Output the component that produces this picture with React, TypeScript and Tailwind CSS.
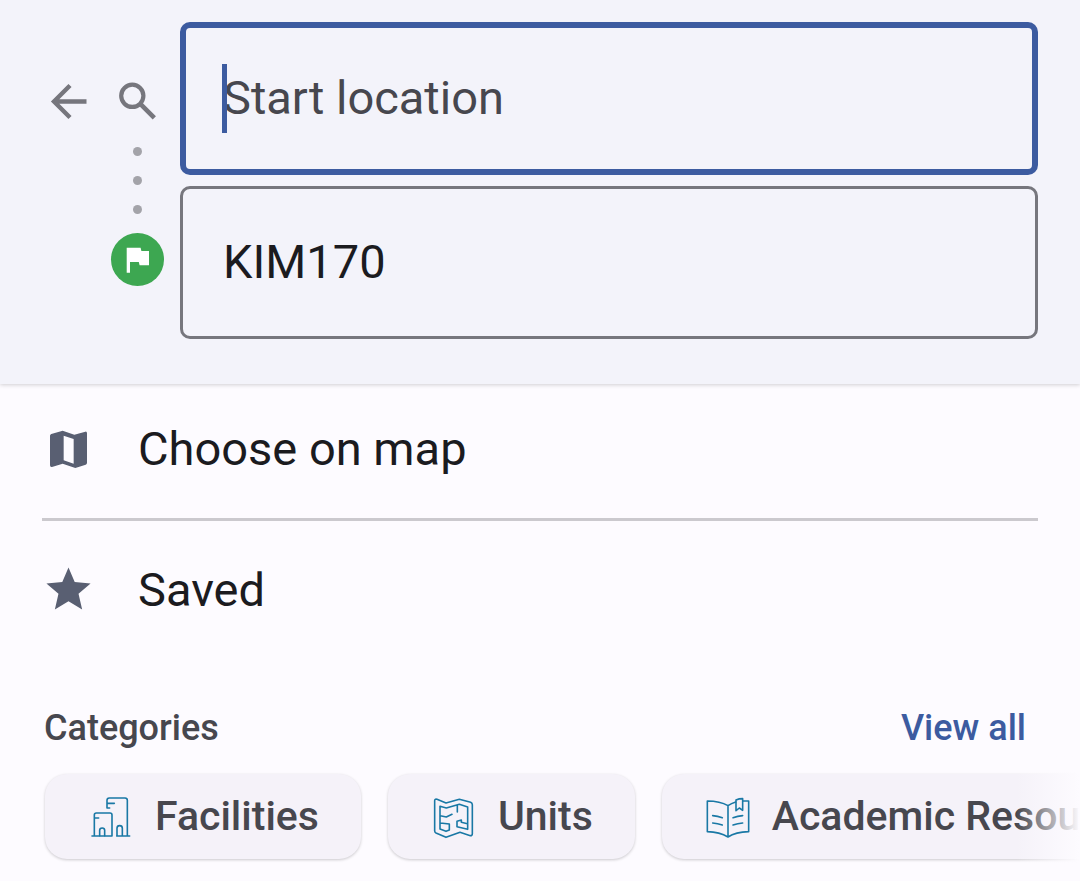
import type { ReactNode } from "react";

function ArrowLeftIcon() {
  return (
    <svg viewBox="0 0 53 53" className="size-[53px]" fill="none" stroke="#76767d" strokeWidth="4.4" aria-hidden="true">
      <path d="M44.5 26.5H12M28 10.5L12 26.5L28 42.5" />
    </svg>
  );
}

function SearchIcon() {
  return (
    <svg viewBox="0 0 53 53" className="size-[53px]" fill="none" stroke="#76767d" strokeWidth="4.2" aria-hidden="true">
      <circle cx="21.3" cy="20.8" r="11.1" />
      <path d="M29.3 28.8L43.3 42.8" strokeWidth="4.6" />
    </svg>
  );
}

function FlagIcon() {
  return (
    <svg viewBox="0 0 53 53" className="size-[53px]" fill="#fff" aria-hidden="true">
      <path d="M15.7 14.7H29.6L30.4 18H38V32.3H28.6L27.8 29H19V39.7H15.7Z" />
    </svg>
  );
}

function MapIcon() {
  return (
    <svg viewBox="36 36 159 159" className="size-[53px]" fill="#595f72" aria-hidden="true">
      <path
        fillRule="evenodd"
        d="M64 72L98 62.500L133 74L166 65Q171 64 171 70V158Q171 162 167 164L136 174L98 161L66 171Q60 172 60 166V77Q60 73.500 64 72ZM101 77V151L131 161V87Z"
      />
    </svg>
  );
}

function StarIcon() {
  return (
    <svg viewBox="0 0 24 24" className="size-[53px]" fill="#595f72" aria-hidden="true">
      <path d="M12 17.270L18.180 21L16.540 13.970L22 9.240L14.810 8.630L12 2L9.190 8.630L2 9.240L7.460 13.970L5.820 21Z" />
    </svg>
  );
}

function BuildingsIcon() {
  return (
    <svg viewBox="176 100 132 132" className="size-11 shrink-0" fill="none" stroke="#1978a5" strokeWidth="4.8" strokeLinecap="round" strokeLinejoin="round" aria-hidden="true">
      <path d="M185 223H245M192 223V160Q192 154 198 154H239Q245 154 245 160V223M194 169H205" />
      <path d="M208 222V206Q208 199 215.500 199Q223 199 223 206V222" />
      <path d="M238 139H230V116Q230 109 237 109H284Q291 109 291 116V223M231 125H252M259 223H298M260 222V200Q260 192 268 192Q276 192 276 200V222" />
    </svg>
  );
}

function FloorPlanIcon() {
  return (
    <svg viewBox="156 100 132 132" className="size-11 shrink-0" fill="none" stroke="#1978a5" strokeWidth="4.8" strokeLinecap="round" strokeLinejoin="round" aria-hidden="true">
      <path d="M164 117Q164 111 171 113L198 124L238 113L272 122Q277 124 277 129V216Q277 222 271 222L240 212L198 227L168 214Q164 212 164 208Z" />
      <path d="M180 134L199 139L238 128L263 136V203L231 195V179L244 175M180 134V202L198 209L208 205V187L181 184M181 162L199 166L216 158M232 131V151M244 175V182L262 186" />
    </svg>
  );
}

function BookIcon() {
  return (
    <svg viewBox="167 100 132 132" className="size-11 shrink-0" fill="none" stroke="#1978a5" strokeWidth="4.8" strokeLinecap="round" strokeLinejoin="round" aria-hidden="true">
      <path d="M233 132Q209 118 171 118V210Q208 211 233 226Q256 211 295 210V118H278M233 132Q243 125 256 121M233 132V226" />
      <path d="M257 115Q266 111 277 111V146L267 139L257 147Z" />
      <path d="M187 162Q202 163 216 168M187 184Q202 185 216 190M248 168Q262 163 277 162M248 190Q262 185 277 184" />
    </svg>
  );
}

function CategoryChip({ icon, label }: { icon: ReactNode; label: string }) {
  return (
    <button
      type="button"
      className="flex h-[85px] shrink-0 items-center gap-[22px] rounded-[22px] bg-[#f5f2f9] pr-[42px] pl-11 text-[41px] font-medium whitespace-nowrap text-[#47474e] shadow-[0_1px_3px_rgba(0,0,0,0.2)]"
    >
      {icon}
      {label}
    </button>
  );
}

export default function App() {
  return (
    <main className="min-h-screen overflow-hidden bg-[#fdfbff] font-[Roboto,sans-serif] text-[#1b1b1f]">
      <header className="flex gap-4 bg-[#f3f3fa] px-[42px] pt-[22px] pb-[45px] shadow-[0_1px_4px_rgba(0,0,0,0.18)]">
        <button type="button" aria-label="Back" className="mt-[53px] size-[53px] shrink-0">
          <ArrowLeftIcon />
        </button>
        <div className="flex shrink-0 flex-col items-center gap-[19px] pt-[53px]">
          <SearchIcon />
          <div className="flex flex-col gap-5">
            <span className="size-[9px] rounded-full bg-[#a3a3a9]" />
            <span className="size-[9px] rounded-full bg-[#a3a3a9]" />
            <span className="size-[9px] rounded-full bg-[#a3a3a9]" />
          </div>
          <span className="rounded-full bg-[#3da751]">
            <FlagIcon />
          </span>
        </div>
        <div className="flex min-w-0 flex-1 flex-col gap-[11px]">
          <div className="relative">
            <input
              type="text"
              aria-label="Start location"
              placeholder="Start location"
              className="block h-[153px] w-full rounded-[10px] border-6 border-[#3c5ba0] bg-transparent px-[37px] pb-[2px] text-[47px] outline-none placeholder:text-[#47474e]"
            />
            <span className="absolute top-[42px] left-[42px] h-[69px] w-[5px] bg-[#3c5ba0]" />
          </div>
          <input
            type="text"
            aria-label="Destination"
            defaultValue="KIM170"
            className="block h-[153px] w-full rounded-[10px] border-3 border-[#76767d] bg-transparent px-10 pb-[2px] text-[47px] outline-none"
          />
        </div>
      </header>

      <nav className="px-[42px]">
        <button type="button" className="flex w-full items-center gap-[43px] border-b-3 border-[#cbc9ce] pt-[38px] pb-[43px] text-left text-[47px] leading-[53px]">
          <MapIcon />
          Choose on map
        </button>
        <button type="button" className="flex w-full items-center gap-[43px] pt-[42px] text-left text-[47px] leading-[53px]">
          <StarIcon />
          Saved
        </button>
      </nav>

      <section className="pt-[88px] pb-[14px]">
        <div className="flex items-center justify-between pr-[54px] pl-11 text-[36px] leading-[48px] font-medium">
          <h2 className="text-[#47474e]">Categories</h2>
          <a href="#categories" className="text-[#3c5ba0]">
            View all
          </a>
        </div>
        <div id="categories" className="relative">
          <div className="flex gap-[27px] overflow-x-auto pt-[22px] pb-2 pl-[45px] [scrollbar-width:none]">
            <CategoryChip icon={<BuildingsIcon />} label="Facilities" />
            <CategoryChip icon={<FloorPlanIcon />} label="Units" />
            <CategoryChip icon={<BookIcon />} label="Academic Resources" />
          </div>
          <div className="pointer-events-none absolute inset-y-0 right-0 w-16 bg-linear-to-r from-[#fdfbff]/0 to-[#fdfbff]" />
        </div>
      </section>
    </main>
  );
}
